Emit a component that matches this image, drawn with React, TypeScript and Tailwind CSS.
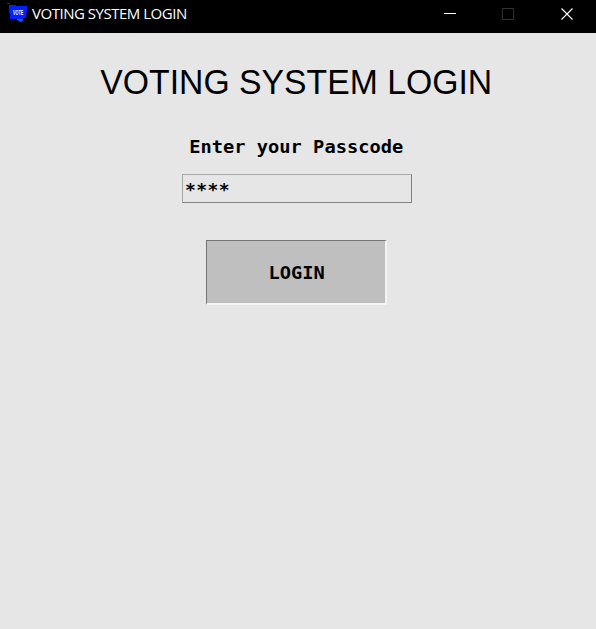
import React, { useState } from "react";

function BallotIcon() {
  return (
    <svg width="22" height="22" viewBox="0 0 22 22" className="ml-[6px] mt-[1px] shrink-0">
      <path d="M1 2H4V3H1ZM3 4H10V5H21V9L20 17H17V20L12 19L11 18H4V13L3 12Z" fill="#0020ff" />
      <path d="M11 18H17V19L15 21L11 19Z" fill="#0068ff" />
      <text transform="translate(7 14) scale(0.47 1)" fontSize="8" fontWeight="700" fill="white" fontFamily="Liberation Sans, sans-serif">VOTE</text>
    </svg>
  );
}

export default function App() {
  const [code, setCode] = useState("****");
  return (
    <div className="flex h-[629px] w-[596px] flex-col overflow-hidden bg-[#e6e6e6] text-black">
      <header className="flex h-[33px] shrink-0 items-start bg-black text-white">
        <BallotIcon />
        <span className="ml-1 mt-[3px] whitespace-nowrap font-['Open_Sans',sans-serif] text-[15px] leading-[21px] tracking-[-0.48px]">VOTING SYSTEM LOGIN</span>
        <svg width="134" height="28" viewBox="0 0 134 28" fill="none" className="ml-auto mr-[20px]">
          <path d="M2 13.5H14" stroke="white" />
          <path d="M60.5 8.5H71.5V19.5H60.5Z" stroke="#333" />
          <path d="M119.5 8.5L130.5 19.5M130.5 8.5L119.5 19.5" stroke="white" strokeWidth="1.1" />
        </svg>
      </header>
      <main className="flex flex-col items-center pr-[2px]">
        <h1 className="mr-px mt-[29px] origin-center scale-x-[0.964] whitespace-nowrap font-['Liberation_Sans',sans-serif] text-[35px] leading-10">VOTING SYSTEM LOGIN</h1>
        <label htmlFor="passcode" className="mr-px mt-[33px] scale-x-110 whitespace-nowrap font-['DejaVu_Sans_Mono',monospace] text-[17px] font-bold leading-6">Enter your Passcode</label>
        <input
          id="passcode"
          value={code}
          onChange={(e) => setCode(e.target.value)}
          className="mt-[15px] h-[29px] w-[230px] border border-t-[#a8a8a8] border-l-[#a8a8a8] border-r-[#808080] border-b-[#808080] pl-[2px] pt-[2px] font-['DejaVu_Sans_Mono',monospace] text-[18px] font-bold tracking-[0.4px] outline-none"
        />
        <button className="mr-px mt-[37px] h-[65px] w-[181px] border border-t-[#747474] border-l-[#747474] border-r-2 border-b-2 border-r-[#f4f4f4] border-b-[#f4f4f4] bg-[#bfbfbf] pl-px pt-[4px] font-['DejaVu_Sans_Mono',monospace] text-[17px] font-bold">
          <span className="inline-block scale-x-110">LOGIN</span>
        </button>
      </main>
    </div>
  );
}
